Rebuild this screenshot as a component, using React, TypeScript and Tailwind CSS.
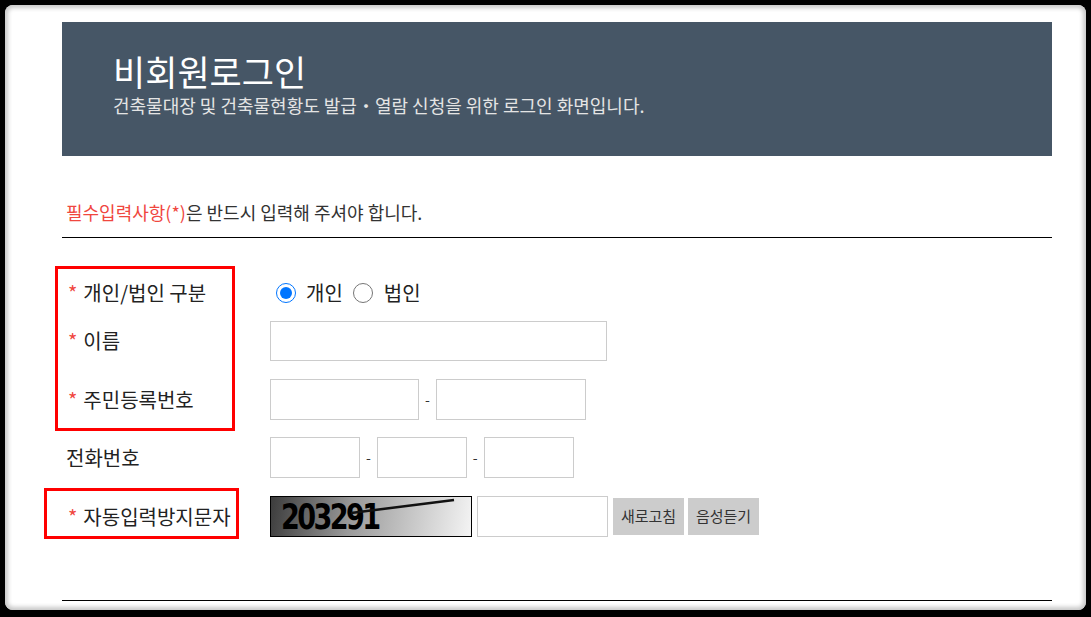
import React from 'react'

const FONT = { fontFamily: '"Noto Sans CJK KR", "Noto Sans", sans-serif' }

function Req() {
  return <span className="mr-[6px] text-[#f0473f]">*</span>
}

function Box({ className = '' }: { className?: string }) {
  return <input type="text" className={`h-[40px] border border-[#cccccc] bg-white outline-none ${className}`} />
}

function Dash() {
  return <span className="px-[6px] text-[14px] text-[#333]">-</span>
}

export default function App() {
  return (
    <div className="h-[617px] w-[1091px] bg-black p-[5px]" style={FONT}>
      <div className="flex h-[605px] flex-col rounded-[8px] bg-white pl-[57px] pr-[34px] pt-[17px] shadow-[inset_0_0_4px_3px_#c8c8c8]">
        <div className="flex h-[134px] flex-col bg-[#465666] pl-[51px] pt-[27px]">
          <h1 className="text-[35px] leading-[44px] text-white">비회원로그인</h1>
          <p className="text-[18px] leading-[24px] text-[#e4e4e4]">
            건축물대장 및 건축물현황도 발급・열람 신청을 위한 로그인 화면입니다.
          </p>
        </div>

        <p className="mt-[43px] pl-[4px] text-[18px] leading-[26px] text-[#333]">
          <span className="text-[#f0473f]">필수입력사항(*)</span>은 반드시 입력해 주셔야 합니다.
        </p>
        <div className="mt-[12px] h-px bg-black" />

        <div className="relative flex flex-col pt-[39px] text-[20px] text-[#222]">
          <div className="flex h-[32px] items-center">
            <div className="w-[208px] pl-[6px]"><Req />개인/법인 구분</div>
            <label className="ml-[6px] flex items-center gap-[10px]">
              <input type="radio" name="kind" defaultChecked className="h-[20px] w-[20px]" />
              개인
            </label>
            <label className="ml-[10px] flex items-center gap-[11px]">
              <input type="radio" name="kind" className="h-[20px] w-[20px]" />
              법인
            </label>
          </div>

          <div className="mt-[12px] flex h-[40px] items-center">
            <div className="w-[208px] pl-[6px]"><Req />이름</div>
            <Box className="w-[337px]" />
          </div>

          <div className="mt-[18px] flex h-[41px] items-center">
            <div className="w-[208px] pl-[6px]"><Req />주민등록번호</div>
            <Box className="h-[41px] w-[149px]" />
            <Dash />
            <Box className="h-[41px] w-[150px]" />
          </div>

          <div className="mt-[17px] flex h-[41px] items-center">
            <div className="w-[208px] pl-[4px]">전화번호</div>
            <Box className="h-[41px] w-[90px]" />
            <Dash />
            <Box className="h-[41px] w-[90px]" />
            <Dash />
            <Box className="h-[41px] w-[90px]" />
          </div>

          <div className="mt-[18px] flex h-[41px] items-center">
            <div className="w-[208px] pl-[6px]"><Req />자동입력방지문자</div>
            <div className="relative h-[41px] w-[202px] overflow-hidden border border-black bg-[linear-gradient(100deg,#3c3c3c_0%,#9a9a9a_40%,#f4f4f4_100%)]">
              <span
                className="absolute left-[10px] top-[-6px] text-[35px] font-bold tracking-[-3px] text-black"
                style={{ fontFamily: '"DejaVu Sans Condensed", "DejaVu Sans", sans-serif', transform: 'scaleX(0.86)', transformOrigin: 'left' }}
              >
                203291
              </span>
              <svg className="absolute inset-0" width="202" height="41">
                <path d="M80 16 L183 3" stroke="#111" strokeWidth="2.5" />
              </svg>
            </div>
            <Box className="ml-[5px] h-[41px] w-[131px]" />
            <button className="ml-[5px] h-[37px] w-[71px] bg-[#cccccc] text-[15px] text-[#333]">새로고침</button>
            <button className="ml-[4px] h-[37px] w-[71px] bg-[#cccccc] text-[15px] text-[#333]">음성듣기</button>
          </div>

          <div className="pointer-events-none absolute left-[-7px] top-[28px] h-[165px] w-[180px] border-[3px] border-[#ff0000]" />
          <div className="pointer-events-none absolute left-[-18px] top-[250px] h-[51px] w-[195px] border-[3px] border-[#ff0000]" />
        </div>

        <div className="mt-[63px] h-px bg-black" />
      </div>
    </div>
  )
}
